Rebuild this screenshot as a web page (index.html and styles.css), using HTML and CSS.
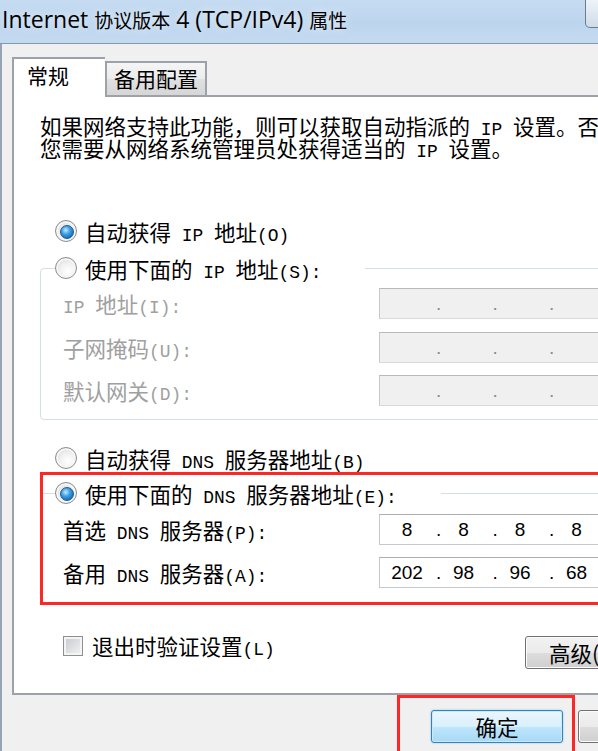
FILE: index.html
```html
<!DOCTYPE html>
<html lang="zh-CN">

<head>
    <meta charset="UTF-8">
    <meta name="viewport" content="width=device-width, initial-scale=1.0">
    <title>Internet 协议版本 4 (TCP/IPv4) 属性</title>
    <link rel="stylesheet" href="styles.css">
</head>

<body>
    <div class="window">
        <div class="titlebar">
            <span class="title">Internet <span class="cjk">协议版本</span> 4 (TCP/IPv4) <span class="cjk">属性</span></span>
            <span class="close"></span>
        </div>

        <div class="client">
            <div class="tabs">
                <div class="tab active">常规</div>
                <div class="tab">备用配置</div>
            </div>

            <div class="panel">
                <p class="intro">如果网络支持此功能，则可以获取自动指派的<span class="en"> IP </span>设置。否则，<br>您需要从网络系统管理员处获得适当的<span class="en"> IP </span>设置。</p>

                <div class="radio-row top-radio">
                    <span class="radio checked"></span>
                    <span>自动获得<span class="en"> IP </span>地址<span class="en">(O)</span></span>
                </div>

                <fieldset class="group group-ip">
                    <legend>
                        <span class="radio-row">
                            <span class="radio"></span>
                            <span>使用下面的<span class="en"> IP </span>地址<span class="en">(S):</span></span>
                        </span>
                    </legend>
                    <div class="field-row disabled">
                        <span class="label"><span class="en">IP </span>地址<span class="en">(I):</span></span>
                        <div class="ipbox">
                            <span class="oct"></span><span class="dot">.</span>
                            <span class="oct"></span><span class="dot">.</span>
                            <span class="oct"></span><span class="dot">.</span>
                            <span class="oct"></span>
                        </div>
                    </div>
                    <div class="field-row disabled">
                        <span class="label">子网掩码<span class="en">(U):</span></span>
                        <div class="ipbox">
                            <span class="oct"></span><span class="dot">.</span>
                            <span class="oct"></span><span class="dot">.</span>
                            <span class="oct"></span><span class="dot">.</span>
                            <span class="oct"></span>
                        </div>
                    </div>
                    <div class="field-row disabled">
                        <span class="label">默认网关<span class="en">(D):</span></span>
                        <div class="ipbox">
                            <span class="oct"></span><span class="dot">.</span>
                            <span class="oct"></span><span class="dot">.</span>
                            <span class="oct"></span><span class="dot">.</span>
                            <span class="oct"></span>
                        </div>
                    </div>
                </fieldset>

                <div class="radio-row dns-auto">
                    <span class="radio"></span>
                    <span>自动获得<span class="en"> DNS </span>服务器地址<span class="en">(B)</span></span>
                </div>

                <fieldset class="group group-dns">
                    <legend>
                        <span class="radio-row">
                            <span class="radio checked"></span>
                            <span>使用下面的<span class="en"> DNS </span>服务器地址<span class="en">(E):</span></span>
                        </span>
                    </legend>
                    <div class="field-row">
                        <span class="label">首选<span class="en"> DNS </span>服务器<span class="en">(P):</span></span>
                        <div class="ipbox">
                            <span class="oct">8</span><span class="dot">.</span>
                            <span class="oct">8</span><span class="dot">.</span>
                            <span class="oct">8</span><span class="dot">.</span>
                            <span class="oct">8</span>
                        </div>
                    </div>
                    <div class="field-row">
                        <span class="label">备用<span class="en"> DNS </span>服务器<span class="en">(A):</span></span>
                        <div class="ipbox">
                            <span class="oct">202</span><span class="dot">.</span>
                            <span class="oct">98</span><span class="dot">.</span>
                            <span class="oct">96</span><span class="dot">.</span>
                            <span class="oct">68</span>
                        </div>
                    </div>
                </fieldset>

                <div class="options">
                    <span class="checkbox"></span>
                    <span class="check-text">退出时验证设置<span class="en">(L)</span></span>
                    <button class="btn btn-adv">高级(V)...</button>
                </div>
            </div>

            <div class="buttons">
                <button class="btn btn-default">确定</button>
                <button class="btn">取消</button>
            </div>
        </div>

        <!-- 红框标注 -->
        <div class="mark mark-dns"></div>
        <div class="mark mark-ok"></div>
    </div>
</body>

</html>
```

FILE: styles.css
```css
* {
    box-sizing: border-box;
}

body {
    margin: 0;
    width: 598px;
    height: 751px;
    overflow: hidden;
    background: #f0f0f0;
    font-family: "Noto Sans CJK SC", sans-serif;
    font-size: 21.5px;
    color: #000;
}

.window {
    position: relative;
    width: 740px;
    height: 751px;
}

/* 标题栏 */
.titlebar {
    display: flex;
    align-items: flex-start;
    height: 44px;
    background: linear-gradient(to bottom, #c5dbf1 0%, #bcd5ee 55%, #c4daf1 100%);
    border-bottom: 1px solid #8796a8;
}

.title {
    padding: 4px 0 0 2px;
    font-family: "Open Sans", "Noto Sans CJK SC", sans-serif;
    font-size: 23px;
    line-height: 30px;
    white-space: nowrap;
    text-shadow: 0 0 10px rgba(255, 255, 255, 0.9);
}

.title .cjk {
    font-family: "Noto Sans CJK SC", sans-serif;
    font-size: 19px;
}

.close {
    margin-left: auto;
    margin-right: 78px;
    width: 77px;
    height: 28px;
    border: 1px solid #6c7b8d;
    border-top: none;
    border-radius: 0 0 5px 5px;
    background: linear-gradient(#edf3f9, #d0dbe8);
}

.client {
    height: 707px;
    border-left: 2px solid #95a3b4;
    padding: 13px 0 0 10px;
}

/* 选项卡 */
.tabs {
    position: relative;
    z-index: 1;
    display: flex;
    align-items: flex-end;
    height: 38px;
}

.tab {
    width: 102px;
    height: 34px;
    padding-left: 7px;
    border: 2px solid #9da1a9;
    border-bottom: none;
    background: linear-gradient(#f5f5f5 0%, #ececec 50%, #e0e0e0 51%, #d6d6d6 100%);
    font-size: 21px;
    line-height: 30px;
}

.tab.active {
    width: 93px;
    height: 40px;
    margin-bottom: -2px;
    padding-left: 13px;
    border-right: none;
    background: #fff;
    line-height: 33px;
}

.panel {
    width: 717px;
    height: 600px;
    padding-right: 68px;
    border: 2px solid #9da1a9;
    background: #fff;
}

.en {
    font-family: "Liberation Mono", monospace;
    font-size: 17.9px;
    line-height: 0;
}

.intro {
    margin: 18px 0 0 26px;
    line-height: 22px;
    white-space: nowrap;
}

/* 单选框 */
.radio-row {
    display: flex;
    align-items: center;
    gap: 8px;
    height: 24px;
    white-space: nowrap;
}

.top-radio {
    margin: 60px 0 0 41px;
}

.dns-auto {
    margin: 26px 0 0 41px;
}

.radio {
    position: relative;
    flex: none;
    width: 22px;
    height: 22px;
    border: 1px solid #8d8d8d;
    border-radius: 50%;
    background: radial-gradient(circle at 60% 65%, #ffffff 0%, #f2f2f2 40%, #d2d2d2 100%);
    box-shadow: inset 0 0 0 2px #f6f6f6;
}

.radio.checked::after {
    content: "";
    position: absolute;
    left: 4px;
    top: 4px;
    width: 12px;
    height: 12px;
    border: 1px solid #1d5a8e;
    border-radius: 50%;
    background: radial-gradient(circle at 40% 35%, #c6ecff 0%, #3a9ee6 40%, #0c4f94 100%);
}

/* 分组框 */
.group {
    width: 640px;
    min-width: 0;
    margin: 13px 0 0 26px;
    padding: 0 0 13px 0;
    border: 1px solid #d5dfe5;
    border-radius: 4px;
}

.group legend {
    margin-left: 14px;
    padding: 0 44px 0 0;
}

.group-dns {
    margin-top: 11px;
    padding-bottom: 14px;
}

.field-row {
    display: flex;
    align-items: center;
    height: 31px;
    margin-top: 12.5px;
    padding-left: 22px;
    white-space: nowrap;
}

.group-ip .field-row:first-of-type {
    margin-top: 8px;
}

.group-dns .field-row {
    margin-top: 12px;
}

.group-dns .field-row:first-of-type {
    margin-top: 9px;
}

.label {
    width: 316px;
    flex: none;
}

.disabled .label {
    color: #a0a0a0;
}

.ipbox {
    display: flex;
    flex: none;
    width: 232px;
    height: 31px;
    padding-left: 4px;
    border: 1px solid #c6cacf;
    border-top-color: #abadb3;
    background: #fff;
    font-family: "Liberation Sans", sans-serif;
    font-size: 19px;
    line-height: 29px;
}

.disabled .ipbox {
    border-color: #b9b9b9 #d9d9d9 #d9d9d9 #c9c9c9;
    background: #f0f0f0;
    color: #8c8c8c;
}

.oct {
    width: 46px;
    text-align: center;
}

.dot {
    width: 10.5px;
    padding-left: 6px;
}

/* 底部选项 */
.options {
    display: flex;
    align-items: flex-start;
    margin-top: 31px;
    padding-left: 49px;
    white-space: nowrap;
}

.checkbox {
    flex: none;
    width: 20px;
    height: 20px;
    margin-top: 2px;
    border: 1px solid #8e8f8f;
    background: linear-gradient(135deg, #c4c8ce 0%, #f4f4f4 100%);
    box-shadow: inset 0 0 0 2px #f4f4f4;
}

.check-text {
    margin-left: 9px;
    line-height: 24px;
}

.btn {
    width: 132px;
    height: 33px;
    padding: 0;
    border: 1px solid #707070;
    border-radius: 3px;
    background: linear-gradient(#f2f2f2 0%, #ebebeb 50%, #dddddd 51%, #cfcfcf 100%);
    box-shadow: inset 0 0 0 1px #fcfcfc;
    font-family: "Noto Sans CJK SC", sans-serif;
    font-size: 21.5px;
    line-height: 29px;
    color: #000;
    white-space: nowrap;
}

.btn-adv {
    width: 134px;
    margin: 2px 0 0 auto;
    padding-left: 2px;
}

.btn-default {
    border-color: #3c7fb1;
    background: linear-gradient(#eaf6fd 0%, #d9f0fc 50%, #bee6fd 51%, #a7d9f5 100%);
    box-shadow: inset 0 0 0 1px #c6ebff, 0 0 2px #6fc3f4;
}

.buttons {
    display: flex;
    justify-content: flex-end;
    gap: 15px;
    margin-top: 15px;
    padding-right: 30px;
}

/* 红框 */
.mark {
    position: absolute;
    border: 3px solid #ff2626;
}

.mark-dns {
    left: 40px;
    top: 472px;
    width: 620px;
    height: 133px;
}

.mark-ok {
    left: 397px;
    top: 695px;
    width: 178px;
    height: 70px;
}
```
